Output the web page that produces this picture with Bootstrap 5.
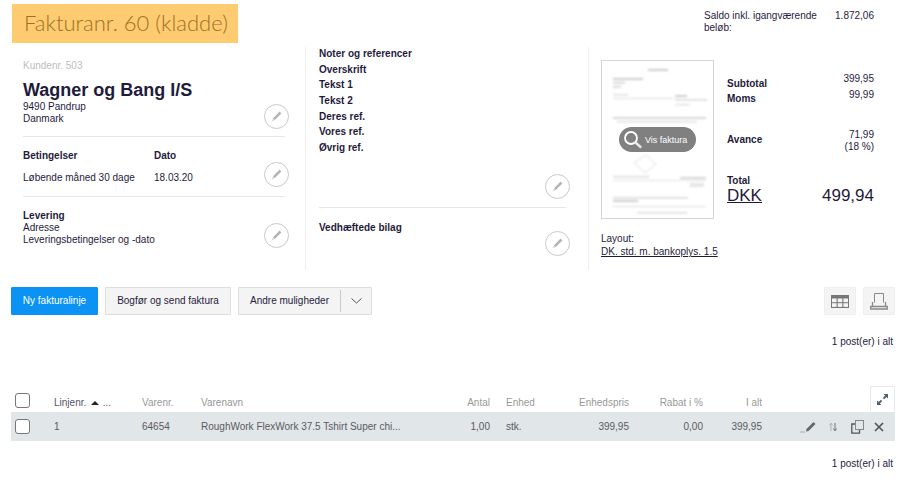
<!DOCTYPE html>
<html lang="da">
<head>
<meta charset="utf-8">
<title>Fakturanr. 60 (kladde)</title>
<link href="https://cdn.jsdelivr.net/npm/bootstrap@5.3.0/dist/css/bootstrap.min.css" rel="stylesheet">
<style>
html,body{height:484px;overflow:hidden}
body{font-family:"Liberation Sans",Arial,sans-serif;font-size:10px;line-height:12px;color:#1f1b3d;background:#fff;width:900px}
b,.lbl{font-weight:700}
.top-strip{height:47px}
.draft-title{margin:4px 0 0 12px;width:226px;height:39px;background:#ffcb70;color:#9a7229;font-family:Lato,sans-serif;font-size:22px;line-height:37px;padding-left:12px;font-weight:300;white-space:nowrap}
.saldo{margin:10px 26px 0 auto;width:170px;display:flex;justify-content:space-between}
.saldo-text{width:120px;line-height:12px}
.sheet{height:223px}
.pane-a{width:305px;padding:13px 20px 0 23px;flex:none}
.pane-b{width:283px;border-left:1px solid #eee;padding:0 22px 0 13px;flex:none}
.pane-c{border-left:1px solid #eee;padding:13px 0 0 12px;flex:none;width:300px}
.sec{position:relative;border-bottom:1px solid #e6e6e6}
.sec-last{border-bottom:0}
.sec1{height:77px}
.cust{color:#bdbdbd;height:15px}
.cname{font-size:18px;line-height:20px;font-weight:700;margin-top:5px;height:21px}
.sec2{height:60px;padding-top:13px}
.term-col{width:131px}
.term-val{margin-top:10px}
.sec3{height:70px;padding-top:13px}
.round-edit{position:absolute;right:-4px;width:25px;height:25px;border:1px solid #c9c9c9;border-radius:50%;display:flex;align-items:center;justify-content:center;background:#fff;padding:0}
.re1{top:44px}.re2{top:25px}.re3{top:26px}
.notes{height:161px;padding-top:1px}
.notes div{height:15.7px;font-weight:700;line-height:12px}
.re4{top:127px}.re5{top:23px}
.attach{height:62px;padding-top:14px;font-weight:700}
.thumb-wrap{position:relative;width:113px;height:159px;border:1px solid #d6d6d6;background:#fff;flex:none}
.thumb-wrap svg{display:block}
.pill{position:absolute;left:17px;top:66px;width:77px;height:25px;border-radius:13px;background:#808080;color:#fff;font-size:9px;display:flex;align-items:center;padding-left:3px;gap:2px}
.layout-note{margin-top:14px}
.layout-note a{color:#1f1b3d;display:block;margin-top:1px}
.totals{margin-left:13px;width:147px;flex:none;padding-top:13px}
.t-row{display:flex;justify-content:space-between}
.t-sub{height:16px}
.t-sub b{padding-top:5px}
.t-moms{height:40px}
.t-moms b{padding-top:4px}
.t-avance{height:46px}
.t-avance b{padding-top:5px}
.t-total{font-size:17px;line-height:22px;margin-top:-2px}
.t-total a{color:#1f1b3d}
.tool-row{height:28px;margin-top:17px;padding:0 5px 0 11px}
.act{height:28px;font-size:10px;line-height:12px;padding:0;border-radius:1px;color:#1f1b3d;background:#f4f4f4;border:1px solid #ddd;display:flex;align-items:center;justify-content:center}
.act-primary{width:87px;background:#0a93f5;border-color:#0a93f5;color:#fff;font-weight:400}
.act-send{width:126px;margin-left:7px}
.act-more{width:134px;margin-left:7px;justify-content:flex-start}
.act-more .m1{width:102px;text-align:center;border-right:1px solid #c9c9c9;line-height:22px}
.act-more .m2{flex:1;text-align:center;line-height:0}
.act-ico{width:32px;background:#f4f4f4;border:1px solid #eee;margin-left:7px}
.count{text-align:right;padding-right:7px;height:12px}
.count1{margin-top:21px}
.grid-wrap{position:relative;margin:38px 5px 0 11px;width:884px}
.expand{position:absolute;right:0;top:0;width:25px;height:25px;border:1px solid #e8e8e8;border-bottom:0;background:#fff;display:flex;align-items:center;justify-content:center;padding:0}
.lines{table-layout:fixed;width:884px;margin:0;font-size:10px;--bs-table-bg:transparent}
.lines th,.lines td{padding:0 4px;border:0;white-space:nowrap;vertical-align:middle;line-height:12px}
.lines thead th{height:26px;color:#999;font-weight:400;padding-top:8px}
.lines thead th.pick{padding-top:2px}
.lines thead th.sorted{color:#55536a}
.lines tbody td{height:29px;background:#e1e6e8;color:#5b5a62;box-shadow:none}
.lines .num{text-align:right}
.lines .pr{padding-right:12px}
.box{display:block;width:15px;height:15px;border:1px solid #777;border-radius:3px;background:#fff;margin:0;padding:0;appearance:none}
.tri{display:inline-block;width:0;height:0;border:4px solid transparent;border-top:0;border-bottom:4px solid #222;margin:0 1px 1px 2px}
.row-tools{display:flex;align-items:center;justify-content:flex-end;padding-right:7px}
.ti-edit{margin-right:12px}
.ti-sort{margin-right:14px}
.ti-copy{margin-right:10px}
.count2{margin-top:17px}
</style>
</head>
<body>
<div class="top-strip d-flex">
  <div class="draft-title">Fakturanr. 60 (kladde)</div>
  <div class="saldo"><div class="saldo-text">Saldo inkl. igangværende beløb:</div><div>1.872,06</div></div>
</div>
<div class="sheet d-flex">
  <div class="pane-a">
    <div class="sec sec1">
      <div class="cust">Kundenr. 503</div>
      <div class="cname">Wagner og Bang I/S</div>
      <div>9490 Pandrup</div>
      <div>Danmark</div>
      <button class="round-edit re1" aria-label="Rediger"><svg width="13" height="13" viewBox="0 0 13 13"><path d="M9.6 1.6l1.8 1.8-6.8 6.8-1.8-1.8z" fill="#b5b5b5"/><path d="M2.3 9l1.7 1.7-2.3.6z" fill="#d5d5d5"/></svg></button>
    </div>
    <div class="sec sec2">
      <div class="d-flex lbl"><div class="term-col">Betingelser</div><div>Dato</div></div>
      <div class="d-flex term-val"><div class="term-col">Løbende måned 30 dage</div><div>18.03.20</div></div>
      <button class="round-edit re2" aria-label="Rediger"><svg width="13" height="13" viewBox="0 0 13 13"><path d="M9.6 1.6l1.8 1.8-6.8 6.8-1.8-1.8z" fill="#b5b5b5"/><path d="M2.3 9l1.7 1.7-2.3.6z" fill="#d5d5d5"/></svg></button>
    </div>
    <div class="sec sec3 sec-last">
      <div class="lbl">Levering</div>
      <div>Adresse</div>
      <div>Leveringsbetingelser og -dato</div>
      <button class="round-edit re3" aria-label="Rediger"><svg width="13" height="13" viewBox="0 0 13 13"><path d="M9.6 1.6l1.8 1.8-6.8 6.8-1.8-1.8z" fill="#b5b5b5"/><path d="M2.3 9l1.7 1.7-2.3.6z" fill="#d5d5d5"/></svg></button>
    </div>
  </div>
  <div class="pane-b">
    <div class="sec notes">
      <div>Noter og referencer</div>
      <div>Overskrift</div>
      <div>Tekst 1</div>
      <div>Tekst 2</div>
      <div>Deres ref.</div>
      <div>Vores ref.</div>
      <div>Øvrig ref.</div>
      <button class="round-edit re4" aria-label="Rediger"><svg width="13" height="13" viewBox="0 0 13 13"><path d="M9.6 1.6l1.8 1.8-6.8 6.8-1.8-1.8z" fill="#b5b5b5"/><path d="M2.3 9l1.7 1.7-2.3.6z" fill="#d5d5d5"/></svg></button>
    </div>
    <div class="sec sec-last attach">
      Vedhæftede bilag
      <button class="round-edit re5" aria-label="Rediger"><svg width="13" height="13" viewBox="0 0 13 13"><path d="M9.6 1.6l1.8 1.8-6.8 6.8-1.8-1.8z" fill="#b5b5b5"/><path d="M2.3 9l1.7 1.7-2.3.6z" fill="#d5d5d5"/></svg></button>
    </div>
  </div>
  <div class="pane-c">
    <div class="d-flex">
      <div class="thumb-wrap">
        <svg width="111" height="157" viewBox="0 0 111 157">
          <defs><filter id="soft"><feGaussianBlur stdDeviation="1"/></filter></defs>
          <g fill="#a9a9a9" filter="url(#soft)" opacity=".6">
            <rect x="46" y="8" width="20" height="2"/>
            <rect x="11" y="17" width="30" height="2"/><rect x="11" y="21" width="12" height="1.5"/><rect x="11" y="25" width="8" height="1.5"/>
            <rect x="11" y="33" width="15" height="1.5" opacity=".7"/><rect x="11" y="37" width="60" height="1" opacity=".7"/>
            <rect x="73" y="34" width="12" height="2"/><rect x="73" y="38" width="32" height="1.5" opacity=".8"/><rect x="73" y="43" width="15" height="1.5" opacity=".6"/>
            <rect x="11" y="56" width="93" height="2" opacity=".8"/><rect x="15" y="60" width="80" height="1.5" opacity=".6"/>
            <path d="M32 102l12-8 10 9-11 9z" fill="none" stroke="#c8c8c8"/>
            <rect x="11" y="115" width="36" height="1.5" opacity=".8"/><rect x="11" y="119" width="93" height="1" opacity=".6"/>
            <rect x="78" y="116" width="26" height="2" opacity=".8"/><rect x="88" y="122" width="14" height="4" opacity=".5"/>
            <rect x="11" y="136" width="75" height="1.5" opacity=".8"/><rect x="11" y="139" width="25" height="2"/>
            <rect x="11" y="145" width="93" height="1" opacity=".7"/><rect x="35" y="151" width="50" height="1.5" opacity=".7"/>
          </g>
        </svg>
        <div class="pill">
          <svg width="21" height="21" viewBox="0 0 21 21"><circle cx="9" cy="9" r="6" fill="none" stroke="#fff" stroke-width="1.8"/><path d="M13.5 13.5l5 4.5" stroke="#e8e8e8" stroke-width="2.4" stroke-linecap="round"/></svg>
          <span>Vis faktura</span>
        </div>
      </div>
      <div class="totals">
        <div class="t-row t-sub"><b>Subtotal</b><span>399,95</span></div>
        <div class="t-row t-moms"><b>Moms</b><span>99,99</span></div>
        <div class="t-row t-avance"><b>Avance</b><span class="text-end">71,99<br>(18 %)</span></div>
        <div><b>Total</b></div>
        <div class="t-row t-total"><a href="#">DKK</a><span>499,94</span></div>
      </div>
    </div>
    <div class="layout-note">Layout:<a href="#">DK. std. m. bankoplys. 1.5</a></div>
  </div>
</div>
<div class="tool-row d-flex">
  <button class="btn act act-primary">Ny fakturalinje</button>
  <button class="btn act act-send">Bogfør og send faktura</button>
  <div class="btn act act-more"><span class="m1">Andre muligheder</span><span class="m2"><svg width="11" height="6" viewBox="0 0 11 6"><path d="M.5.5l5 4.500 5-4.500" fill="none" stroke="#555"/></svg></span></div>
  <button class="btn act act-ico ms-auto" aria-label="Tabel"><svg width="18" height="13" viewBox="0 0 18 13"><rect width="18" height="13" fill="#777"/><rect x="1" y="3.5" width="4.6" height="3.7" fill="#f4f4f4"/><rect x="6.7" y="3.5" width="4.6" height="3.7" fill="#f4f4f4"/><rect x="12.4" y="3.5" width="4.6" height="3.7" fill="#f4f4f4"/><rect x="1" y="8.2" width="4.6" height="3.7" fill="#f4f4f4"/><rect x="6.7" y="8.2" width="4.6" height="3.7" fill="#f4f4f4"/><rect x="12.4" y="8.2" width="4.6" height="3.7" fill="#f4f4f4"/></svg></button>
  <button class="btn act act-ico" aria-label="Udskriv"><svg width="18" height="17" viewBox="0 0 18 17"><path d="M4.5 9.5V.5h9v9" fill="none" stroke="#888"/><path d="M2.500 9v4M15.500 9v4M.7 13.500h16.600V16H.7z" fill="none" stroke="#888" stroke-width="1.300"/></svg></button>
</div>
<div class="count count1">1 post(er) i alt</div>
<div class="grid-wrap">
  <button class="expand" aria-label="Udvid"><svg width="13" height="13" viewBox="0 0 13 13"><path d="M7.500 1H12v4.500l-1.600-1.600-2.300 2.300-1.300-1.300 2.300-2.300zM1 12V7.500l1.600 1.600 2.300-2.300 1.300 1.300-2.300 2.300L5.500 12z" fill="#4f6170"/></svg></button>
  <table class="table lines">
    <colgroup><col style="width:39px"><col style="width:88px"><col style="width:59px"><col style="width:265px"><col style="width:40px"><col style="width:58px"><col style="width:73px"><col style="width:74px"><col style="width:59px"><col style="width:129px"></colgroup>
    <thead><tr>
      <th class="pick"><input type="checkbox" class="box" aria-label="Vælg alle"></th>
      <th class="sorted">Linjenr. <span class="tri"></span> ...</th>
      <th>Varenr.</th><th>Varenavn</th><th class="num pr">Antal</th><th>Enhed</th><th class="num">Enhedspris</th><th class="num">Rabat i %</th><th class="num">I alt</th><th></th>
    </tr></thead>
    <tbody><tr>
      <td><input type="checkbox" class="box" aria-label="Vælg"></td>
      <td>1</td><td>64654</td><td>RoughWork FlexWork 37.5 Tshirt Super chi...</td><td class="num pr">1,00</td><td>stk.</td><td class="num">399,95</td><td class="num">0,00</td><td class="num">399,95</td>
      <td><div class="row-tools">
        <svg class="ti-edit" width="18" height="12" viewBox="0 0 18 12"><path d="M1 11h5" stroke="#aaa"/><path d="M14.500 1l2 2-7 7-2.500.5.500-2.500z" fill="#666"/></svg>
        <svg class="ti-sort" width="8" height="10" viewBox="0 0 8 10"><path d="M2 9V2M.4 3.500L2 1l1.600 2.500" fill="none" stroke="#b0b0b0"/><path d="M6 1v7M4.400 6.500L6 9l1.600-2.500" fill="none" stroke="#777"/></svg>
        <svg class="ti-copy" width="13" height="14" viewBox="0 0 13 14"><rect x="4.500" y=".5" width="8" height="9" fill="none" stroke="#888"/><path d="M4 4H.8v9.200H8.500V10" fill="none" stroke="#555" stroke-width="1.300"/></svg>
        <svg width="10" height="10" viewBox="0 0 10 10"><path d="M1 1l8 8M9 1l-8 8" stroke="#555" stroke-width="1.700"/></svg>
      </div></td>
    </tr></tbody>
  </table>
</div>
<div class="count count2">1 post(er) i alt</div>
<script src="https://cdn.jsdelivr.net/npm/bootstrap@5.3.0/dist/js/bootstrap.bundle.min.js"></script>
</body>
</html>
